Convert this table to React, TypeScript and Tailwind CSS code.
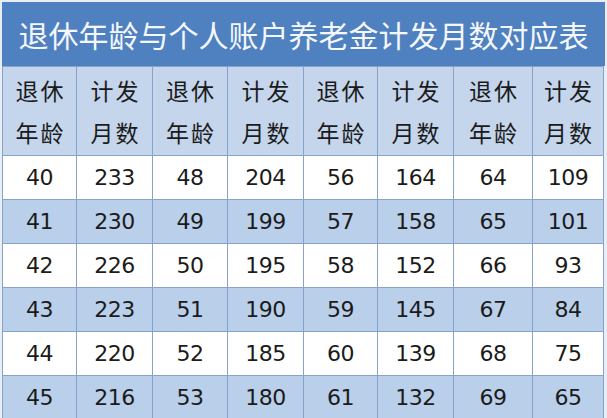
import React from "react";

const rows: [number, number][][] = [
  [[40, 233], [48, 204], [56, 164], [64, 109]],
  [[41, 230], [49, 199], [57, 158], [65, 101]],
  [[42, 226], [50, 195], [58, 152], [66, 93]],
  [[43, 223], [51, 190], [59, 145], [67, 84]],
  [[44, 220], [52, 185], [60, 139], [68, 75]],
  [[45, 216], [53, 180], [61, 132], [69, 65]],
];

const font = { fontFamily: '"Noto Sans CJK SC", "Noto Sans", sans-serif' };
const numFont = { fontFamily: '"DejaVu Sans", "Noto Sans", sans-serif' };

export default function App() {
  return (
    <div
      className="w-[607px] h-[418px] overflow-hidden bg-[#e9eef5] pt-[2px] pl-[2px]"
      style={font}
    >
      <div className="w-[603px] h-[64px] bg-[#4f80c0] flex items-center justify-center text-[#f4f7fb] text-[30px] leading-none">
        退休年龄与个人账户养老金计发月数对应表
      </div>
      <div className="w-[602px] grid grid-cols-[73px_75px_74px_75px_73px_75px_78px_70px] gap-px bg-[#86a3cc] border border-[#86a3cc] text-[#1b1b1b]">
        {Array.from({ length: 8 }).map((_, i) => (
          <div
            key={"h" + i}
            className="h-[88px] bg-[#c4d5ec] flex flex-col items-center justify-center text-[23px] leading-[42px] tracking-[2px] pl-[2px]"
          >
            {i % 2 === 0 ? (
              <>
                <span>退休</span>
                <span>年龄</span>
              </>
            ) : (
              <>
                <span>计发</span>
                <span>月数</span>
              </>
            )}
          </div>
        ))}
        {rows.map((r, ri) =>
          r.flatMap(([a, b], ci) => [
            <div
              key={`${ri}-${ci}-a`}
              style={numFont}
              className={`h-[43px] flex items-center justify-center text-[22px] leading-none tracking-[-0.5px] ${
                ri % 2 === 1 ? "bg-[#bacfea]" : "bg-white"
              }`}
            >
              {a}
            </div>,
            <div
              key={`${ri}-${ci}-b`}
              style={numFont}
              className={`h-[43px] flex items-center justify-center text-[22px] leading-none tracking-[-0.5px] ${
                ri % 2 === 1 ? "bg-[#bacfea]" : "bg-white"
              }`}
            >
              {b}
            </div>,
          ])
        )}
      </div>
    </div>
  );
}
